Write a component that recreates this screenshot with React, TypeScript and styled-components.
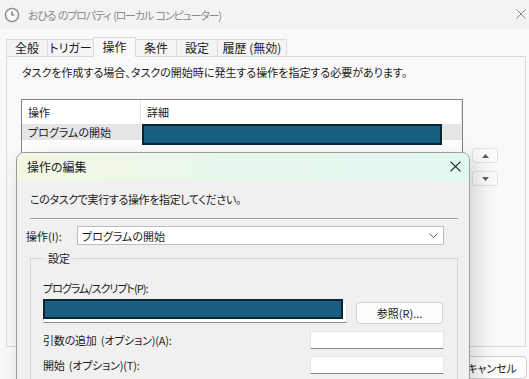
import { FC } from "react";
import styled, { createGlobalStyle } from "styled-components";

const TABS = [
  { label: "全般", width: 42 },
  { label: "トリガー", width: 47 },
  { label: "操作", width: 43, active: true },
  { label: "条件", width: 42 },
  { label: "設定", width: 42 },
  { label: "履歴 (無効)", width: 70 },
];

const GlobalStyle = createGlobalStyle`
  html, body {
    margin: 0;
    padding: 0;
  }
  body {
    width: 529px;
    height: 379px;
    overflow: hidden;
    background: #f9f9f9;
    color: #1b1b1b;
    font-family: "Noto Sans CJK JP", "Noto Sans", sans-serif;
    font-size: 11px;
    line-height: 16px;
    font-feature-settings: "palt";
  }
`;

const ClockIcon = () => (
  <svg width="16" height="16" viewBox="0 0 16 16">
    <circle cx="8" cy="8" r="6.6" fill="#eeeeee" stroke="#8c8c8c" strokeWidth="1.3" />
    <circle cx="8" cy="8" r="4.6" fill="#fbfbfb" />
    <path d="M8 4.6V8h2.6" fill="none" stroke="#5a5a5a" strokeWidth="1.1" />
  </svg>
);

const CloseIcon: FC<{ color: string; size: number }> = ({ color, size }) => (
  <svg width={size} height={size} viewBox="0 0 10 10">
    <path d="M0.5 0.5l9 9M9.5 0.5l-9 9" stroke={color} strokeWidth="1" />
  </svg>
);

const Chevron = () => (
  <svg width="9" height="5" viewBox="0 0 9 5">
    <path d="M0.5 0.5l4 4 4-4" fill="none" stroke="#6b6b6b" strokeWidth="1" />
  </svg>
);

const Arrow: FC<{ up?: boolean }> = ({ up }) => (
  <svg width="7" height="4" viewBox="0 0 7 4">
    <path d={up ? "M0 4h7L3.5 0z" : "M0 0h7L3.5 4z"} fill="#5f5f5f" />
  </svg>
);

const App = () => (
  <Window>
    <GlobalStyle />
    <TitleBar>
      <ClockIcon />
      <TitleText>おひる のプロパティ (ローカル コンピューター)</TitleText>
      <TitleClose>
        <CloseIcon color="#8a8a8a" size={10} />
      </TitleClose>
    </TitleBar>

    <TabStrip>
      {TABS.map((tab) => (
        <Tab key={tab.label} width={tab.width} active={tab.active}>
          {tab.label}
        </Tab>
      ))}
    </TabStrip>

    <Panel>
      <Description>
        タスクを作成する場合、タスクの開始時に発生する操作を指定する必要があります。
      </Description>
      <ListArea>
        <ListView>
          <ListHeader>
            <HeaderCell width={119}>操作</HeaderCell>
            <HeaderCell>詳細</HeaderCell>
          </ListHeader>
          <ListRow>
            <RowCell width={119}>プログラムの開始</RowCell>
            <DetailCell>
              <Redact width={300} height={21} />
            </DetailCell>
          </ListRow>
        </ListView>
        <MoveButtons>
          <MoveButton>
            <Arrow up />
          </MoveButton>
          <MoveButton>
            <Arrow />
          </MoveButton>
        </MoveButtons>
      </ListArea>
    </Panel>

    <Footer>
      <FooterButton>OK</FooterButton>
      <FooterButton>キャンセル</FooterButton>
    </Footer>

    <Dialog>
      <DialogTitle>
        <span>操作の編集</span>
        <CloseIcon color="#1b1b1b" size={11} />
      </DialogTitle>
      <DialogBody>
        <Instruction>このタスクで実行する操作を指定してください。</Instruction>
        <Separator />
        <ComboRow>
          <ComboLabel>操作(I):</ComboLabel>
          <Combo>
            <span>プログラムの開始</span>
            <Chevron />
          </Combo>
        </ComboRow>
        <Group>
          <Legend>設定</Legend>
          <FieldLabel>プログラム/スクリプト(P):</FieldLabel>
          <ProgramRow>
            <ProgramInput>
              <Redact width={300} height={20} overlay />
            </ProgramInput>
            <BrowseButton>参照(R)...</BrowseButton>
          </ProgramRow>
          <OptionRow>
            <OptionLabel>引数の追加 (オプション)(A):</OptionLabel>
            <TextBox />
          </OptionRow>
          <OptionRow>
            <OptionLabel>開始 (オプション)(T):</OptionLabel>
            <TextBox />
          </OptionRow>
        </Group>
      </DialogBody>
    </Dialog>
  </Window>
);

const Window = styled.div`
  position: relative;
  width: 529px;
  height: 379px;
  overflow: hidden;
  display: flex;
  flex-direction: column;
  background: #f9f9f9;
`;

const TitleBar = styled.div`
  display: flex;
  align-items: center;
  height: 30px;
  padding-left: 4px;
  background: #f3f3f3;
  color: #8a8a8a;
`;

const TitleText = styled.span`
  flex: 1;
  margin-left: 8px;
  letter-spacing: -1.2px;
  word-spacing: 1.5px;
`;

const TitleClose = styled.div`
  display: flex;
  margin: -2px 3px 0 0;
`;

const TabStrip = styled.div`
  display: flex;
  align-items: flex-end;
  height: 19px;
  margin-top: 8px;
  padding-left: 6px;
`;

const Tab = styled.div<{ width: number; active?: boolean }>`
  position: relative;
  z-index: ${({ active }) => (active ? 1 : 0)};
  box-sizing: border-box;
  width: ${({ width }) => width}px;
  height: ${({ active }) => (active ? 20 : 17)}px;
  margin: 0 -1px ${({ active }) => (active ? -1 : 0)}px 0;
  display: flex;
  justify-content: center;
  align-items: ${({ active }) => (active ? "flex-start" : "center")};
  padding-top: ${({ active }) => (active ? 1 : 0)}px;
  border: 1px solid #dadada;
  border-bottom: none;
  background: ${({ active }) => (active ? "#f9f9f9" : "#f4f4f4")};
  color: #1b1b1b;
  font-size: 12px;
  white-space: nowrap;
`;

const Panel = styled.div`
  box-sizing: border-box;
  height: 297px;
  margin: 0 3px 0 6px;
  padding: 7px 0 0 14px;
  border: 1px solid #dadada;
  background: #f9f9f9;
`;

const Description = styled.div`
  padding-left: 1px;
`;

const ListArea = styled.div`
  display: flex;
  margin-top: 19px;
`;

const ListView = styled.div`
  box-sizing: border-box;
  width: 442px;
  height: 200px;
  border: 1px solid #828282;
  background: #ffffff;
`;

const ListHeader = styled.div`
  display: flex;
  height: 24px;
`;

const HeaderCell = styled.div<{ width?: number }>`
  box-sizing: border-box;
  ${({ width }) => (width ? `width: ${width}px;` : "flex: 1;")}
  padding: 4px 0 0 6px;
  border-right: 1px solid #e5e5e5;
`;

const ListRow = styled.div`
  display: flex;
  height: 16px;
`;

const RowCell = styled.div<{ width: number }>`
  box-sizing: border-box;
  width: ${({ width }) => width}px;
  padding-left: 6px;
  background: #e6e6e6;
`;

const DetailCell = styled.div`
  flex: 1;
  height: 16px;
  padding-left: 1px;
  background: #e6e6e6;
`;

const Redact = styled.div<{ width: number; height: number; overlay?: boolean }>`
  box-sizing: border-box;
  width: ${({ width }) => width}px;
  height: ${({ height }) => height}px;
  background: #185f81;
  border: 2px solid #0b2532;
  ${({ overlay }) => overlay && "position: absolute; left: -1px; top: -4px;"}
`;

const MoveButtons = styled.div`
  display: flex;
  flex-direction: column;
  gap: 8px;
  margin: 49px 0 0 9px;
`;

const MoveButton = styled.div`
  box-sizing: border-box;
  width: 26px;
  height: 15px;
  display: flex;
  align-items: center;
  justify-content: center;
  border: 1px solid #e2e2e2;
  border-radius: 3px;
  background: #fbfbfb;
`;

const Footer = styled.div`
  display: flex;
  justify-content: flex-end;
  gap: 8px;
  margin-top: 9px;
  padding-right: 2px;
`;

const FooterButton = styled.div`
  box-sizing: border-box;
  width: 70px;
  height: 23px;
  display: flex;
  align-items: center;
  justify-content: center;
  border: 1px solid #d0d0d0;
  border-radius: 4px;
  background: #fdfdfd;
`;

const Dialog = styled.div`
  position: absolute;
  left: 16px;
  top: 152px;
  box-sizing: border-box;
  width: 454px;
  height: 250px;
  border: 1px solid #9c9c9c;
  border-radius: 8px 8px 0 0;
  background: #f0f0f0;
  box-shadow: 6px 6px 22px rgba(0, 0, 0, 0.16);
  overflow: hidden;
`;

const DialogTitle = styled.div`
  display: flex;
  align-items: center;
  justify-content: space-between;
  height: 28px;
  padding: 0 8px 0 10px;
  background: linear-gradient(90deg, #f4f7e3 0%, #e8f7ec 45%, #e3f7f1 100%);
  font-size: 12px;

  & > svg {
    margin-top: -2px;
  }
`;

const DialogBody = styled.div`
  padding: 0 11px 0 13px;
`;

const Instruction = styled.div`
  margin-top: 10px;
  letter-spacing: -0.35px;
`;

const Separator = styled.div`
  margin-top: 11px;
  border-top: 1px solid #a0a0a0;
  border-bottom: 1px solid #ffffff;
`;

const ComboRow = styled.div`
  display: flex;
  align-items: center;
  margin: 6px 0 0 -4px;
`;

const ComboLabel = styled.span`
  width: 51px;
`;

const Combo = styled.div`
  box-sizing: border-box;
  display: flex;
  align-items: center;
  justify-content: space-between;
  width: 367px;
  height: 19px;
  padding: 0 5px 0 4px;
  border: 1px solid #bdbdbd;
  background: #ffffff;
`;

const Group = styled.fieldset`
  min-width: 0;
  margin: 5px 0 0;
  padding: 0 13px 20px 12px;
  border: 1px solid #d8d8d8;
`;

const Legend = styled.legend`
  margin-left: 2px;
  padding: 0 3px;
`;

const FieldLabel = styled.div`
  margin-top: 14px;
  letter-spacing: -1px;
`;

const ProgramRow = styled.div`
  display: flex;
  align-items: flex-start;
  margin-top: 6px;
`;

const ProgramInput = styled.div`
  position: relative;
  box-sizing: border-box;
  width: 304px;
  height: 21px;
  border: 1px solid #e4e4e4;
  border-bottom-color: #8a8a8a;
  background: #ffffff;
`;

const BrowseButton = styled.div`
  box-sizing: border-box;
  display: flex;
  align-items: center;
  justify-content: center;
  width: 87px;
  height: 22px;
  margin-left: 9px;
  border: 1px solid #d0d0d0;
  border-radius: 4px;
  background: #fdfdfd;
`;

const OptionRow = styled.div`
  display: flex;
  align-items: center;
  justify-content: space-between;
  margin-top: 7px;

  &:nth-of-type(2) {
    margin-top: 8px;
  }
`;

const OptionLabel = styled.span`
  letter-spacing: -0.2px;
  word-spacing: 2px;
`;

const TextBox = styled.div`
  box-sizing: border-box;
  width: 134px;
  height: 18px;
  border: 1px solid #e4e4e4;
  border-bottom-color: #8a8a8a;
  background: #ffffff;
`;

export default App;
